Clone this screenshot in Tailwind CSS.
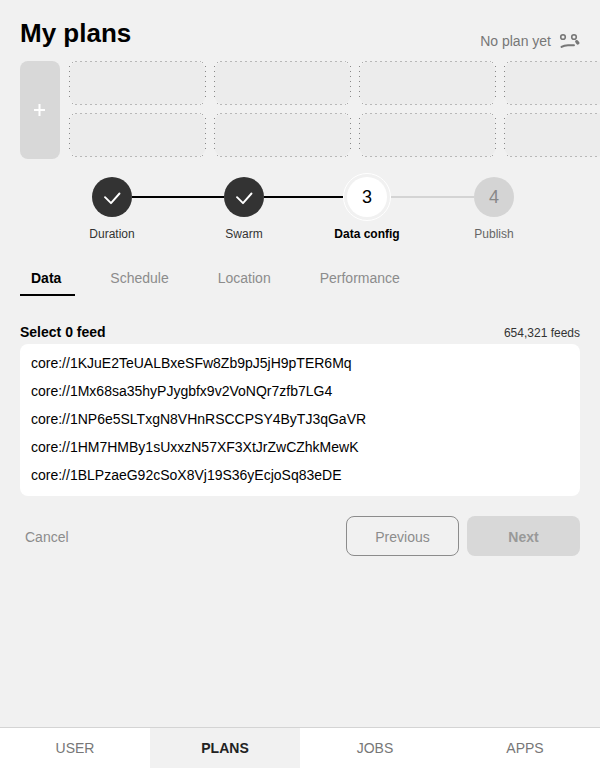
<!DOCTYPE html>
<html lang="en">
<head>
<meta charset="utf-8">
<meta name="viewport" content="width=device-width, initial-scale=1">
<title>My plans</title>
<script src="https://cdn.jsdelivr.net/npm/@tailwindcss/browser@4"></script>
</head>
<body class="flex min-h-screen flex-col bg-[#f1f1f1] font-['Liberation_Sans',Arial,sans-serif] text-sm text-black">
<svg class="hidden" aria-hidden="true">
  <symbol id="slot" viewBox="0 0 137 44">
    <rect x="0.5" y="0.5" width="136" height="43" rx="9" fill="#ececec"/>
    <path d="M6 .5H132M6 43.5H132" stroke="#b8b8b8" stroke-dasharray="2 3" fill="none"/>
    <path d="M.5 5V39M136.5 5V39" stroke="#888" stroke-dasharray="1 4" fill="none"/>
    <path d="M3 1.5h1M133 1.5h1M3 42.5h1M133 42.5h1" stroke="#aaa"/>
  </symbol>
  <symbol id="check" viewBox="0 0 40 40">
    <path d="M13 20.2L19 26.2L27.500 16.500" stroke="#fff" stroke-width="1.9" fill="none" stroke-linecap="round" stroke-linejoin="round"/>
  </symbol>
</svg>

<main class="flex-1 overflow-hidden px-5 pt-4">
  <header class="flex items-start justify-between">
    <h1 class="text-[26px] leading-[34px] font-bold">My plans</h1>
    <p class="flex items-center gap-2 pt-4 leading-[18px] text-[#777]">No plan yet
      <svg class="h-4 w-[21px]" viewBox="0 0 21 16" fill="none" stroke="#777" aria-hidden="true">
        <circle cx="4" cy="4" r="2.3" stroke-width="1.6"/>
        <circle cx="15" cy="4" r="2.3" stroke-width="1.6"/>
        <path d="M2.500 13.900C5 12.300 6.500 12.200 9 12.200H15" stroke-width="1.9" stroke-linecap="round"/>
        <path d="M17.800 8.600L18.800 10" stroke-width="3.2" stroke-linecap="round"/>
      </svg>
    </p>
  </header>

  <section class="-mr-5 mt-[11px] flex gap-[9px] overflow-hidden" aria-label="Plans">
    <button class="flex h-[98px] w-10 shrink-0 items-center justify-center rounded-lg bg-[#d8d8d8]" aria-label="Add plan">
      <svg class="size-3" viewBox="0 0 12 12" stroke="#fff" stroke-width="2" aria-hidden="true"><path d="M0 6H11M5.500 0V12"/></svg>
    </button>
    <div class="grid shrink-0 grid-cols-4 content-start gap-2">
      <svg class="h-11 w-[137px]"><use href="#slot"/></svg>
      <svg class="h-11 w-[137px]"><use href="#slot"/></svg>
      <svg class="h-11 w-[137px]"><use href="#slot"/></svg>
      <svg class="h-11 w-[137px]"><use href="#slot"/></svg>
      <svg class="h-11 w-[137px]"><use href="#slot"/></svg>
      <svg class="h-11 w-[137px]"><use href="#slot"/></svg>
      <svg class="h-11 w-[137px]"><use href="#slot"/></svg>
      <svg class="h-11 w-[137px]"><use href="#slot"/></svg>
    </div>
  </section>

  <ol class="mt-[14px] flex pr-[66px] pl-[72px] text-xs leading-4">
    <li class="flex w-10 flex-col items-center gap-[5px]">
      <span class="flex h-12 items-center"><svg class="size-10 rounded-full bg-[#333]"><use href="#check"/></svg></span>
      <span class="whitespace-nowrap text-[#333]">Duration</span>
    </li>
    <li class="mt-[23px] h-[2px] flex-[92] bg-black" aria-hidden="true"></li>
    <li class="flex w-10 flex-col items-center gap-[5px]">
      <span class="flex h-12 items-center"><svg class="size-10 rounded-full bg-[#333]"><use href="#check"/></svg></span>
      <span class="whitespace-nowrap text-[#333]">Swarm</span>
    </li>
    <li class="mt-[23px] h-[2px] flex-[79] bg-black" aria-hidden="true"></li>
    <li class="flex w-12 flex-col items-center gap-[5px]" aria-current="step">
      <span class="flex size-12 items-center justify-center rounded-full border border-white"><span class="flex size-10 items-center justify-center rounded-full bg-white text-lg">3</span></span>
      <span class="font-bold whitespace-nowrap">Data config</span>
    </li>
    <li class="mt-[23px] h-[2px] flex-[83] bg-[#d4d4d4]" aria-hidden="true"></li>
    <li class="flex w-10 flex-col items-center gap-[5px]">
      <span class="flex h-12 items-center"><span class="flex size-10 items-center justify-center rounded-full bg-[#d4d4d4] text-lg text-[#888]">4</span></span>
      <span class="whitespace-nowrap text-[#666]">Publish</span>
    </li>
  </ol>

  <nav class="mt-[27px] flex gap-6 leading-[18px] text-[#8c8c8c]" aria-label="Data settings">
    <a href="#data" class="border-b-2 border-black pr-[14px] pb-[7px] pl-[11px] font-bold text-black" aria-current="page">Data</a>
    <a href="#schedule" class="pr-[14px] pl-[11px]">Schedule</a>
    <a href="#location" class="pr-[14px] pl-[11px]">Location</a>
    <a href="#performance" class="pr-[14px] pl-[11px]">Performance</a>
  </nav>

  <section class="mt-[27px]">
    <div class="flex items-baseline justify-between leading-[18px]">
      <h2 class="font-bold">Select 0 feed</h2>
      <span class="text-xs leading-4 text-[#333]">654,321 feeds</span>
    </div>
    <ul class="mt-[3px] rounded-lg bg-white px-[11px] pt-[5px] pb-[7px] leading-7">
      <li><button>core://1KJuE2TeUALBxeSFw8Zb9pJ5jH9pTER6Mq</button></li>
      <li><button>core://1Mx68sa35hyPJygbfx9v2VoNQr7zfb7LG4</button></li>
      <li><button>core://1NP6e5SLTxgN8VHnRSCCPSY4ByTJ3qGaVR</button></li>
      <li><button>core://1HM7HMBy1sUxxzN57XF3XtJrZwCZhkMewK</button></li>
      <li><button>core://1BLPzaeG92cSoX8Vj19S36yEcjoSq83eDE</button></li>
    </ul>
  </section>

  <div class="mt-5 flex items-center gap-2">
    <button class="mr-auto h-10 px-[5px] pt-[2px] text-[#8c8c8c]">Cancel</button>
    <button class="h-10 w-[113px] rounded-lg border border-[#8c8c8c] pt-[2px] text-[#8c8c8c]">Previous</button>
    <button class="h-10 w-[113px] rounded-lg bg-[#d8d8d8] pt-[2px] font-bold text-[#999]">Next</button>
  </div>
</main>

<nav class="grid grid-cols-4 border-t border-[#d4d4d4] bg-white text-center leading-10 text-[#777]" aria-label="Main">
  <a href="#user">USER</a>
  <a href="#plans" class="bg-[#f1f1f1] font-bold text-[#222]" aria-current="page">PLANS</a>
  <a href="#jobs">JOBS</a>
  <a href="#apps">APPS</a>
</nav>
</body>
</html>
